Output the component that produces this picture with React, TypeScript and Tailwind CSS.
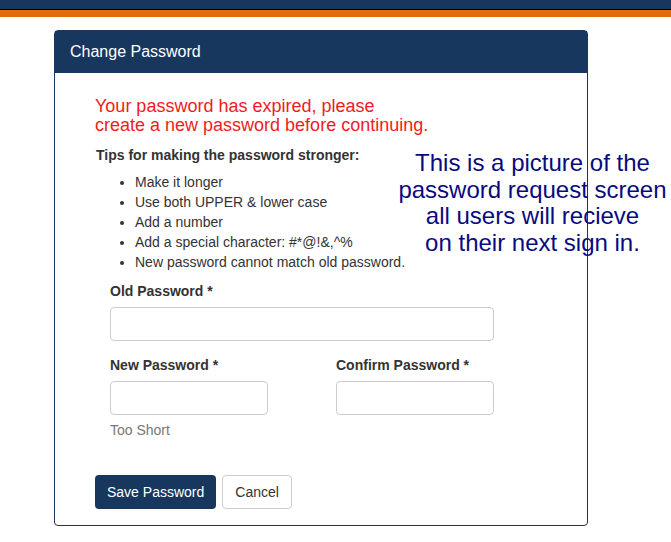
import React from "react";

const tips = [
  "Make it longer",
  "Use both UPPER & lower case",
  "Add a number",
  "Add a special character: #*@!&,^%",
  "New password cannot match old password.",
];

const Field: React.FC<{ label: string; width: string }> = ({ label, width }) => (
  <div className="flex flex-col">
    <label className="text-[14px] font-bold text-[#333] leading-[18px] mb-[7px]">{label}</label>
    <input type="password" className={`${width} h-[34px] rounded-[4px] border border-[#ccc] bg-white outline-none`} />
  </div>
);

export default function App() {
  return (
    <div className="relative w-[671px] h-[542px] bg-white overflow-hidden" style={{ fontFamily: '"Liberation Sans", Arial, sans-serif' }}>
      {/* top bar */}
      <div className="h-[9px] bg-[#17375e]" />
      <div className="h-px bg-black" />
      <div className="h-[7px] bg-[#e06c10]" />

      <div className="ml-[54px] mt-[13px] w-[534px] rounded-[4px] border border-[#17375e]">
        <div className="h-[42px] bg-[#17375e] px-[15px] flex items-center">
          <h1 className="text-[16px] text-white">Change Password</h1>
        </div>

        <div className="pl-[40px] pt-[24px] pb-[16px]">
          <p className="text-[18px] leading-[19px] text-[#f01c1c]">
            Your password has expired, please
            <br />
            create a new password before continuing.
          </p>
          <p className="mt-[11px] pl-px text-[14px] font-bold text-[#333] leading-[18px]">
            Tips for making the password stronger:
          </p>
          <ul className="mt-[8px] pl-[40px] list-disc text-[14px] text-[#333] leading-[20px]">
            {tips.map((t) => (
              <li key={t}>{t}</li>
            ))}
          </ul>

          <div className="pl-[15px] mt-[10px]">
            <Field label="Old Password *" width="w-[384px]" />
            <div className="mt-[15px] flex gap-[68px]">
              <div className="flex flex-col">
                <Field label="New Password *" width="w-[158px]" />
                <span className="mt-[6px] text-[14px] text-[#777] leading-[18px]">Too Short</span>
              </div>
              <Field label="Confirm Password *" width="w-[158px]" />
            </div>
          </div>

          <div className="mt-[36px] flex gap-[6px]">
            <button className="h-[34px] px-[12px] rounded-[4px] bg-[#17375e] text-white text-[14px]">Save Password</button>
            <button className="h-[34px] px-[12px] rounded-[4px] border border-[#ccc] bg-white text-[#333] text-[14px]">Cancel</button>
          </div>
        </div>
      </div>

      {/* caption pasted over the screenshot */}
      <div className="absolute left-[394px] top-[150px] w-[277px] text-center text-[24px] leading-[26.7px] text-[#0a0a80]">
        This is a picture of the
        <br />
        password request screen
        <br />
        all users will recieve
        <br />
        on their next sign in.
      </div>
    </div>
  );
}
